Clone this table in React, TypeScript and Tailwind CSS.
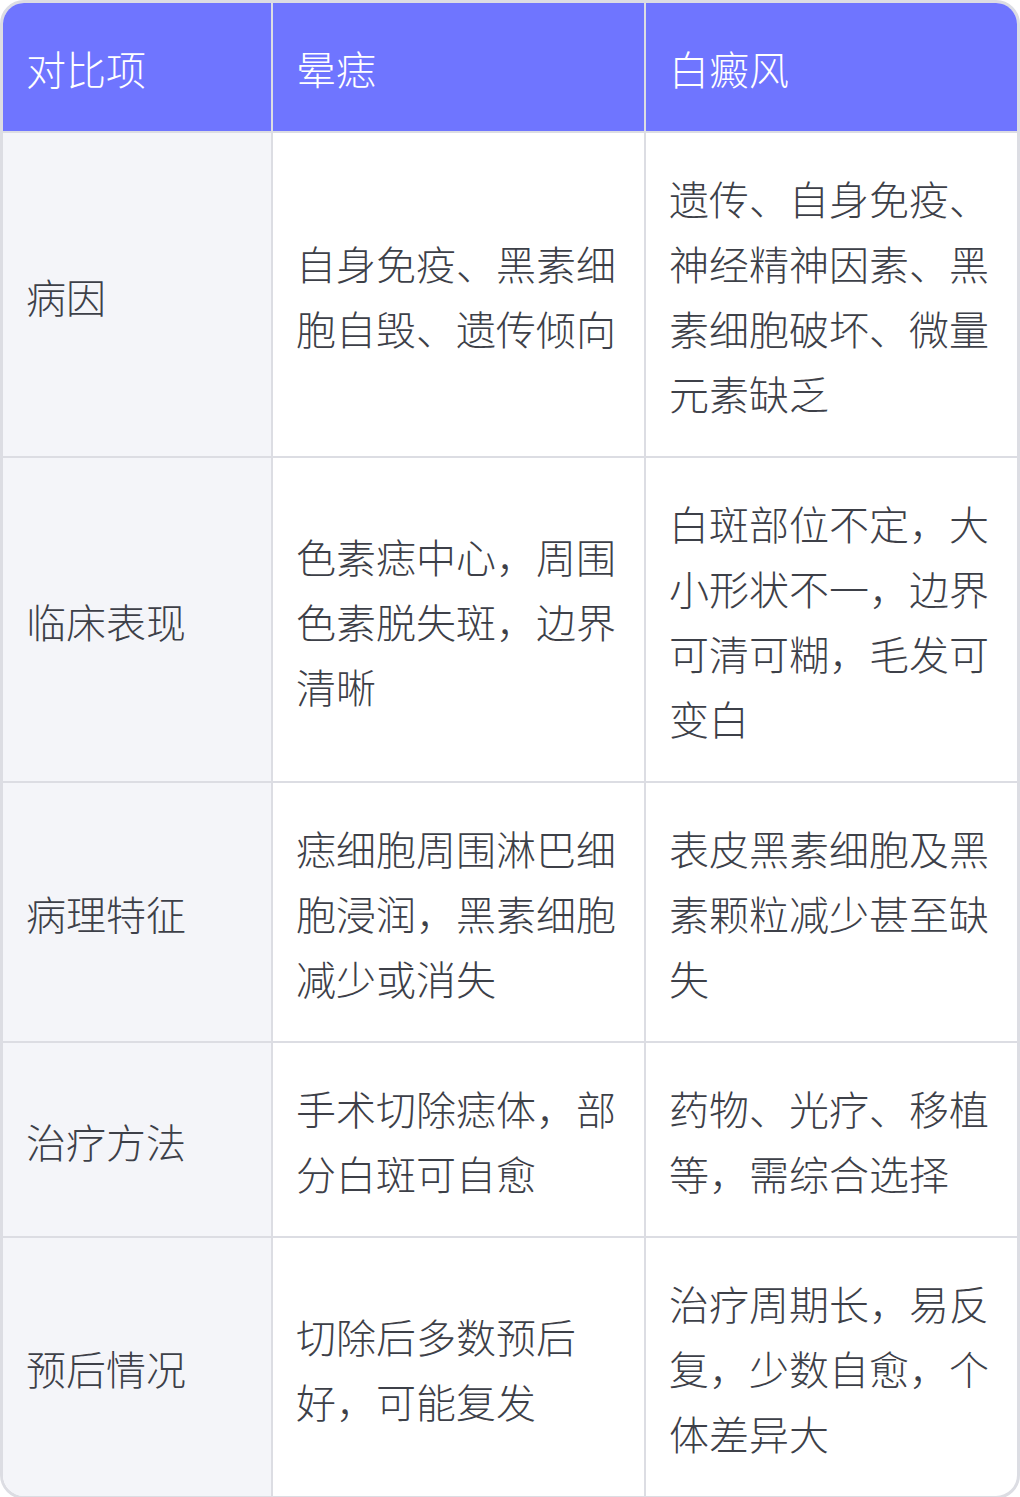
const headers = ['对比项', '晕痣', '白癜风'];

const rows = [
  ['病因', '自身免疫、黑素细胞自毁、遗传倾向', '遗传、自身免疫、神经精神因素、黑素细胞破坏、微量元素缺乏'],
  ['临床表现', '色素痣中心，周围色素脱失斑，边界清晰', '白斑部位不定，大小形状不一，边界可清可糊，毛发可变白'],
  ['病理特征', '痣细胞周围淋巴细胞浸润，黑素细胞减少或消失', '表皮黑素细胞及黑素颗粒减少甚至缺失'],
  ['治疗方法', '手术切除痣体，部分白斑可自愈', '药物、光疗、移植等，需综合选择'],
  ['预后情况', '切除后多数预后好，可能复发', '治疗周期长，易反复，少数自愈，个体差异大'],
];

export default function App() {
  return (
    <div className="w-[1020px] bg-white" style={{ fontFamily: '"Noto Sans CJK SC", "Noto Sans", sans-serif' }}>
      <div className="overflow-hidden rounded-[24px] border-[3px] border-[#dcdde3] font-light">
        <div className="grid grid-cols-[268px_2px_371px_2px_1fr] bg-[#6f75ff] text-white text-[40px] leading-[65px] border-b-2 border-[#dcdde3]">
          <div className="h-[128px] flex items-center pl-[23px] pt-[2px]">{headers[0]}</div>
          <div className="bg-[#dcdde3]" />
          <div className="h-[128px] flex items-center pl-[23px] pt-[2px]">{headers[1]}</div>
          <div className="bg-[#dcdde3]" />
          <div className="h-[128px] flex items-center pl-[23px] pt-[2px]">{headers[2]}</div>
        </div>
        {rows.map((r, i) => (
          <div
            key={i}
            className={`grid grid-cols-[268px_2px_371px_2px_1fr] text-[40px] leading-[65px] text-[#3d4048] ${
              i < rows.length - 1 ? 'border-b-2 border-[#dcdde3]' : ''
            }`}
          >
            <div className="bg-[#f4f5f9] flex items-center pl-[23px] pt-[33px] pb-[30px]">{r[0]}</div>
            <div className="bg-[#dcdde3]" />
            <div className="flex items-center pl-[23px] pr-[20px] pt-[33px] pb-[30px]">{r[1]}</div>
            <div className="bg-[#dcdde3]" />
            <div className="flex items-center pl-[23px] pr-[20px] pt-[33px] pb-[30px]">{r[2]}</div>
          </div>
        ))}
      </div>
    </div>
  );
}
